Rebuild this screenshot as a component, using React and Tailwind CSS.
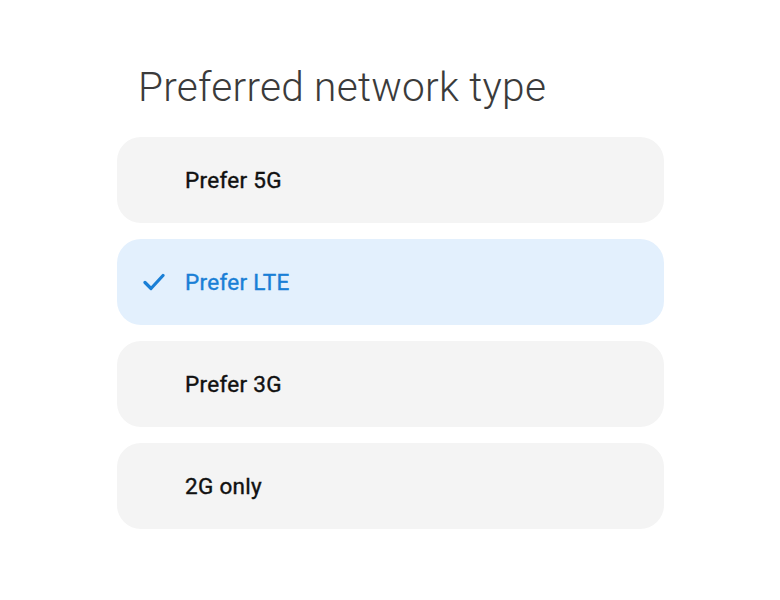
import React from 'react';

export default function App() {
  const options = [
    { id: '5g', label: 'Prefer 5G' },
    { id: 'lte', label: 'Prefer LTE' },
    { id: '3g', label: 'Prefer 3G' },
    { id: '2g', label: '2G only' },
  ];
  const selected = 'lte';

  return (
    <div className="w-[780px] h-[600px] bg-white" style={{ fontFamily: 'Roboto, "Noto Sans", sans-serif' }}>
      <div className="pl-[117px] pt-[63px] w-[664px]">
        {/* Dialog title */}
        <h1 className="pl-[21px] text-[40.6px] leading-[48px] font-light tracking-[0.25px] text-[#3b3b3b]">
          Preferred network type
        </h1>

        {/* Options */}
        <div className="mt-[26px] flex flex-col gap-4">
          {options.map(opt => {
            const isActive = opt.id === selected;
            return (
              <div
                key={opt.id}
                className={`h-[86px] rounded-[24px] flex items-center ${
                  isActive ? 'bg-[#e3f0fd]' : 'bg-[#f4f4f4]'
                }`}
              >
                <div className="w-[68px] flex justify-end pr-[20px]">
                  {isActive && (
                    <svg width="22" height="18" viewBox="0 0 22 18" fill="none">
                      <path d="M2 9.5 L8 15.5 L20 2.5" stroke="#1a7fd6" strokeWidth="3.2" strokeLinecap="round" strokeLinejoin="round" />
                    </svg>
                  )}
                </div>
                <span className={`pt-[2px] text-[22.5px] font-normal tracking-[0.3px] [-webkit-text-stroke:0.4px_currentColor] ${isActive ? 'text-[#1a7fd6]' : 'text-[#111111]'}`}>
                  {opt.label}
                </span>
              </div>
            );
          })}
        </div>
      </div>
    </div>
  );
}
